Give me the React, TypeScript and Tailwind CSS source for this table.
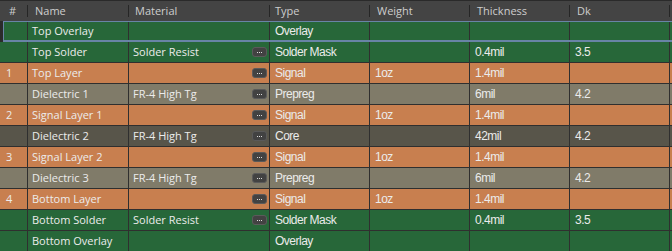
import React from 'react';

type Kind = 'overlay' | 'solder' | 'signal' | 'prepreg' | 'core';

interface Layer {
  num?: string;
  name: string;
  material?: string;
  type: string;
  weight?: string;
  thickness?: string;
  dk?: string;
  kind: Kind;
  editable?: boolean;
  selected?: boolean;
}

const layers: Layer[] = [
  { name: 'Top Overlay', type: 'Overlay', kind: 'overlay', selected: true },
  { name: 'Top Solder', material: 'Solder Resist', type: 'Solder Mask', thickness: '0.4mil', dk: '3.5', kind: 'solder', editable: true },
  { num: '1', name: 'Top Layer', type: 'Signal', weight: '1oz', thickness: '1.4mil', kind: 'signal', editable: true },
  { name: 'Dielectric 1', material: 'FR-4 High Tg', type: 'Prepreg', thickness: '6mil', dk: '4.2', kind: 'prepreg', editable: true },
  { num: '2', name: 'Signal Layer 1', type: 'Signal', weight: '1oz', thickness: '1.4mil', kind: 'signal', editable: true },
  { name: 'Dielectric 2', material: 'FR-4 High Tg', type: 'Core', thickness: '42mil', dk: '4.2', kind: 'core', editable: true },
  { num: '3', name: 'Signal Layer 2', type: 'Signal', weight: '1oz', thickness: '1.4mil', kind: 'signal', editable: true },
  { name: 'Dielectric 3', material: 'FR-4 High Tg', type: 'Prepreg', thickness: '6mil', dk: '4.2', kind: 'prepreg', editable: true },
  { num: '4', name: 'Bottom Layer', type: 'Signal', weight: '1oz', thickness: '1.4mil', kind: 'signal', editable: true },
  { name: 'Bottom Solder', material: 'Solder Resist', type: 'Solder Mask', thickness: '0.4mil', dk: '3.5', kind: 'solder', editable: true },
  { name: 'Bottom Overlay', type: 'Overlay', kind: 'overlay' },
];

const rowBg: Record<Kind, string> = {
  overlay: 'bg-[#276739]',
  solder: 'bg-[#276739]',
  signal: 'bg-[#c87f4f]',
  prepreg: 'bg-[#807b69]',
  core: 'bg-[#58554a]',
};

// Segoe-like UI text vs. the narrower grid font used for numeric columns
const ui = 'font-["Open_Sans","Noto_Sans",sans-serif] text-[11px]';
const data = 'font-["Liberation_Sans",Arial,sans-serif] text-[12px] tracking-[-0.5px]';

function HeaderCell({ label, width, pad }: { label: string; width: string; pad: string }) {
  return (
    <div className={`flex h-full items-center justify-between ${width}`}>
      <span className={`${pad} ${ui} text-[#cdcdcd]`}>{label}</span>
      <span className="h-[12px] w-px bg-[#262626]" />
    </div>
  );
}

function MoreButton() {
  return (
    <span className="mr-[2px] flex h-[10px] w-[15px] shrink-0 items-center justify-center gap-px rounded-[3px] border border-[#5a5a5a] bg-[#424242]">
      <span className="h-px w-px bg-[#dcdcdc]" />
      <span className="h-px w-px bg-[#dcdcdc]" />
      <span className="h-px w-px bg-[#dcdcdc]" />
    </span>
  );
}

function DataCell({ value, width }: { value?: string; width: string }) {
  return (
    <div className={`flex h-full items-center border-r border-[#2f2f2f] pl-[5px] ${width}`}>
      <span className={`${data} text-[#ebebeb]`}>{value}</span>
    </div>
  );
}

function LayerRow({ layer }: { layer: Layer }) {
  return (
    <div className={`relative flex h-[21px] border-b border-[#2f2f2f] ${rowBg[layer.kind]}`}>
      <div className="flex h-full w-[28px] items-center border-r border-[#2f2f2f] pl-[6px]">
        <span className={`${ui} text-[#ececec]`}>{layer.num}</span>
      </div>
      <div className="flex h-full w-[101px] items-center border-r border-[#2f2f2f] pl-[4px]">
        <span className={`${ui} whitespace-nowrap text-[#ececec]`}>{layer.name}</span>
      </div>
      <div className="flex h-full w-[141px] items-center justify-between border-r border-[#2f2f2f] pl-[4px]">
        <span className={`${ui} whitespace-nowrap text-[#ececec]`}>{layer.material}</span>
        {layer.editable && <MoreButton />}
      </div>
      <DataCell value={layer.type} width="w-[100px]" />
      <DataCell value={layer.weight} width="w-[100px]" />
      <DataCell value={layer.thickness} width="w-[100px]" />
      <DataCell value={layer.dk} width="w-[100px]" />
      <div className="flex-1" />
      {layer.selected && (
        <div className="pointer-events-none absolute left-0 top-0 h-[21px] w-[3px] bg-[#2b2b2b]" />
      )}
      {layer.selected && (
        <div className="pointer-events-none absolute left-[3px] right-0 top-0 h-[21px] border-b-2 border-l border-t border-[#6884a6]" />
      )}
    </div>
  );
}

export default function App() {
  return (
    <div className="h-[251px] w-[672px] overflow-hidden bg-[#2b2b2b]">
      <div className="flex h-[21px] border-t border-[#2a2a2a] bg-[#444444]">
        <HeaderCell label="#" width="w-[28px]" pad="pl-[9px]" />
        <HeaderCell label="Name" width="w-[101px]" pad="pl-[7px]" />
        <HeaderCell label="Material" width="w-[141px]" pad="pl-[6px]" />
        <HeaderCell label="Type" width="w-[100px]" pad="pl-[5px]" />
        <HeaderCell label="Weight" width="w-[100px]" pad="pl-[7px]" />
        <HeaderCell label="Thickness" width="w-[100px]" pad="pl-[7px]" />
        <HeaderCell label="Dk" width="w-[100px]" pad="pl-[7px]" />
        <div className="flex-1" />
      </div>
      {layers.map((layer) => (
        <LayerRow key={layer.name} layer={layer} />
      ))}
    </div>
  );
}
